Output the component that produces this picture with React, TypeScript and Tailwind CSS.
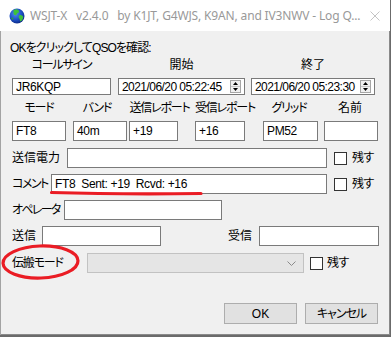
import type { ReactNode } from 'react';

const box = 'flex h-full items-center border border-[#7a7a7a] bg-white pl-[3px] whitespace-pre text-[12px] tracking-[-0.35px] text-black';

function Spinner() {
  return (
    <div className="ml-auto mr-[3px] flex h-[13px] w-[11px] shrink-0 flex-col border border-[#a6a6a6] bg-[#f0f0f0]">
      <div className="flex flex-1 items-center justify-center border-b border-[#c8c8c8]">
        <svg width="5" height="3" viewBox="0 0 5 3">
          <path d="M0 3 L2.5 0 L5 3 Z" fill="#000" />
        </svg>
      </div>
      <div className="flex flex-1 items-center justify-center">
        <svg width="5" height="3" viewBox="0 0 5 3">
          <path d="M0 0 L2.5 3 L5 0 Z" fill="#000" />
        </svg>
      </div>
    </div>
  );
}

function Check() {
  return <div className="h-[13px] w-[13px] shrink-0 border border-[#333333] bg-white" />;
}

function Label({ className, children }: { className: string; children: ReactNode }) {
  return <div className={`shrink-0 whitespace-nowrap text-[12px] text-black ${className}`}>{children}</div>;
}

function Globe() {
  return (
    <svg width="16" height="16" viewBox="0 0 16 16">
      <defs>
        <radialGradient id="sea" cx="0.4" cy="0.35" r="0.7">
          <stop offset="0" stopColor="#4f8cf0" />
          <stop offset="0.6" stopColor="#1c4fc4" />
          <stop offset="1" stopColor="#0b2680" />
        </radialGradient>
      </defs>
      <circle cx="8" cy="8" r="7.5" fill="url(#sea)" />
      <path d="M7 1.2 C9 1.5 10.5 2.5 10 4 C9.4 5.2 8 5 7.6 6.4 C7.2 7.8 5.5 7.5 4.8 6.2 C4.2 5 5 3.6 4.2 2.6 C5 1.8 6 1.3 7 1.2 Z" fill="#3fc23a" />
      <path d="M10.5 7.2 C12 6.8 13.6 7.6 14.2 9 C14 11 13 12.6 11.5 13.6 C10.6 12.6 11 11 10 10 C9.4 9 9.6 7.6 10.5 7.2 Z" fill="#3fc23a" />
      <path d="M3 9.5 C4 9.6 4.6 10.6 4.2 11.6 C3.6 11.8 2.6 11 2.2 10 Z" fill="#2fa52e" />
    </svg>
  );
}

export default function App() {
  return (
    <div className="relative h-[337px] w-[391px] overflow-hidden bg-[#6b6b6b] font-['Liberation_Sans','Noto_Sans_CJK_JP',sans-serif] [font-feature-settings:'palt']">
      <div className="flex h-[335px] w-[390px] flex-col bg-[#f0f0f0] shadow-[inset_1px_0_0_#a3a3a3,inset_-1px_0_0_#8a8a8a,inset_0_-1px_0_#8a8a8a]">
        {/* title bar */}
        <div className="flex h-[31px] shrink-0 items-center bg-white">
          <div className="ml-[9px] flex shrink-0">
            <Globe />
          </div>
          <div className="ml-[5px] whitespace-pre font-['Noto_Sans',sans-serif] text-[12px] tracking-[-0.15px] text-[#999999]">
            {'WSJT-X   v2.4.0   by K1JT, G4WJS, K9AN, and IV3NWV - Log Q...'}
          </div>
          <div className="ml-auto mr-[10px] flex shrink-0">
            <svg width="10" height="10" viewBox="0 0 10 10">
              <path d="M0.5 0.5 L9.5 9.5 M9.5 0.5 L0.5 9.5" stroke="#c4c4c4" strokeWidth="1" />
            </svg>
          </div>
        </div>

        <div className="mt-[8px] flex h-[17px] items-center pl-[10px] text-[12px] tracking-[-0.9px] text-black">
          OKをクリックしてQSOを確認:
        </div>

        {/* row 1 labels */}
        <div className="flex h-[18px] items-center">
          <Label className="ml-[12px] w-[99px] text-center tracking-[-1.2px]">コールサイン</Label>
          <Label className="ml-[7px] w-[127px] text-center">開始</Label>
          <Label className="ml-[6px] w-[124px] text-center">終了</Label>
        </div>

        {/* row 1 inputs */}
        <div className="mt-[4px] flex h-[17px]">
          <div className={`ml-[12px] w-[99px] ${box}`}>JR6KQP</div>
          <div className={`ml-[7px] w-[127px] ${box} text-[11.5px] tracking-[-0.55px]`}>
            2021/06/20 05:22:45
            <Spinner />
          </div>
          <div className={`ml-[6px] w-[124px] ${box} text-[11.5px] tracking-[-0.55px]`}>
            2021/06/20 05:23:30
            <Spinner />
          </div>
        </div>

        {/* row 2 labels */}
        <div className="flex h-[26px] items-center">
          <Label className="ml-[12px] w-[54px] text-center tracking-[-1.2px]">モード</Label>
          <Label className="ml-[4px] w-[54px] text-center tracking-[-1.2px]">バンド</Label>
          <Label className="ml-[5px] w-[61px] text-center tracking-[-1.2px]">送信レポート</Label>
          <Label className="ml-[5px] w-[60px] text-center tracking-[-1.2px]">受信レポート</Label>
          <Label className="ml-[7px] w-[54px] text-center tracking-[-1.2px]">グリッド</Label>
          <Label className="ml-[7px] w-[54px] text-center">名前</Label>
        </div>

        {/* row 2 inputs */}
        <div className="flex h-[20px]">
          <div className={`ml-[12px] w-[54px] ${box}`}>FT8</div>
          <div className={`ml-[7px] w-[54px] ${box}`}>40m</div>
          <div className={`ml-[2px] w-[49px] ${box}`}>+19</div>
          <div className={`ml-[17px] w-[50px] ${box}`}>+16</div>
          <div className={`ml-[18px] w-[55px] ${box}`}>PM52</div>
          <div className={`ml-[6px] w-[54px] ${box}`} />
        </div>

        <div className="mt-[7px] flex h-[20px] items-center">
          <Label className="ml-[12px] w-[55px]">送信電力</Label>
          <div className={`w-[260px] ${box}`} />
          <div className="ml-[7px] flex items-center">
            <Check />
            <span className="ml-[5px] text-[12px] tracking-[-0.5px] text-black">残す</span>
          </div>
        </div>

        <div className="mt-[6px] flex h-[20px] items-center">
          <Label className="ml-[12px] w-[39px] tracking-[-1.5px]">コメント</Label>
          <div className={`w-[276px] ${box}`}>{'FT8  Sent: +19  Rcvd: +16'}</div>
          <div className="ml-[7px] flex items-center">
            <Check />
            <span className="ml-[5px] text-[12px] tracking-[-0.5px] text-black">残す</span>
          </div>
        </div>

        <div className="mt-[6px] flex h-[20px] items-center">
          <Label className="ml-[12px] w-[52px] tracking-[-1.7px]">オペレータ</Label>
          <div className={`w-[158px] ${box}`} />
        </div>

        <div className="mt-[6px] flex h-[20px] items-center">
          <Label className="ml-[12px] w-[30px]">送信</Label>
          <div className={`w-[119px] ${box}`} />
          <Label className="ml-[67px] w-[31px]">受信</Label>
          <div className={`w-[120px] ${box}`} />
        </div>

        <div className="mt-[7px] flex h-[20px] items-center">
          <Label className="ml-[12px] w-[75px] tracking-[-1.2px]">伝搬モード</Label>
          <div className="flex h-full w-[217px] items-center border border-[#c2c2c2] bg-[#e5e5e5]">
            <svg className="ml-auto mr-[7px]" width="9" height="5" viewBox="0 0 9 5">
              <path d="M0.5 0.5 L4.5 4.5 L8.5 0.5" fill="none" stroke="#8a8a8a" strokeWidth="1" />
            </svg>
          </div>
          <div className="ml-[6px] flex items-center">
            <Check />
            <span className="ml-[4px] text-[12px] tracking-[-0.5px] text-black">残す</span>
          </div>
        </div>

        <div className="mt-[30px] flex h-[21px]">
          <button className="ml-[224px] h-full w-[73px] border border-[#adadad] bg-[#e1e1e1] text-[12px] text-black">
            OK
          </button>
          <button className="ml-[8px] h-full w-[73px] border border-[#adadad] bg-[#e1e1e1] text-[12px] tracking-[-1px] text-black">
            キャンセル
          </button>
        </div>
      </div>

      {/* red annotations */}
      <svg className="pointer-events-none absolute left-0 top-0" width="391" height="337" viewBox="0 0 391 337">
        <path d="M51.5 192.5 Q120 194.5 201 193.5" fill="none" stroke="#ea1c24" strokeWidth="3.2" strokeLinecap="round" />
        <ellipse cx="40.5" cy="262" rx="37.5" ry="16" fill="none" stroke="#ea1c24" strokeWidth="3.2" transform="rotate(-2 40.5 262)" />
      </svg>
    </div>
  );
}
